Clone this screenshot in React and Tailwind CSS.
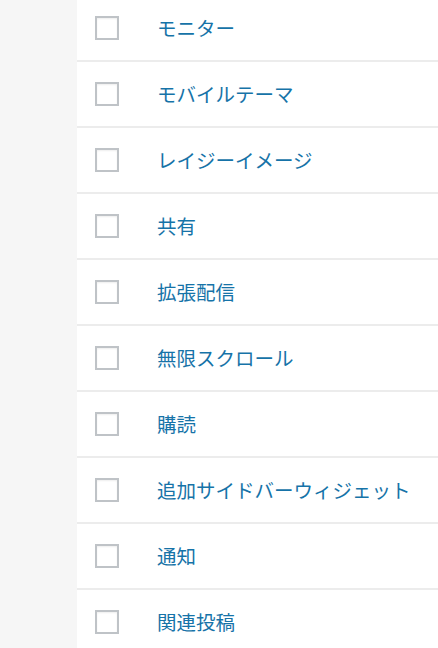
import React from "react";

const modules = [
  "モニター",
  "モバイルテーマ",
  "レイジーイメージ",
  "共有",
  "拡張配信",
  "無限スクロール",
  "購読",
  "追加サイドバーウィジェット",
  "通知",
  "関連投稿",
];

export default function App() {
  return (
    <div className="flex h-[648px] w-[438px] overflow-hidden bg-[#f6f6f6] font-['Noto_Sans_CJK_JP','Noto_Sans',sans-serif]">
      <div className="w-[77px] shrink-0" />
      <ul className="-mt-[4px] flex-1 bg-white">
        {modules.map((name) => (
          <li key={name} className="flex h-[66px] items-center border-b-2 border-[#ececec]">
            <span className="ml-[18px] h-6 w-6 shrink-0 border-2 border-[#bfc3c7] bg-white shadow-[inset_0_1px_2px_rgba(0,0,0,0.07)]" />
            <a className="ml-[38px] text-[19.5px] leading-none text-[#1673a8]">{name}</a>
          </li>
        ))}
      </ul>
    </div>
  );
}
